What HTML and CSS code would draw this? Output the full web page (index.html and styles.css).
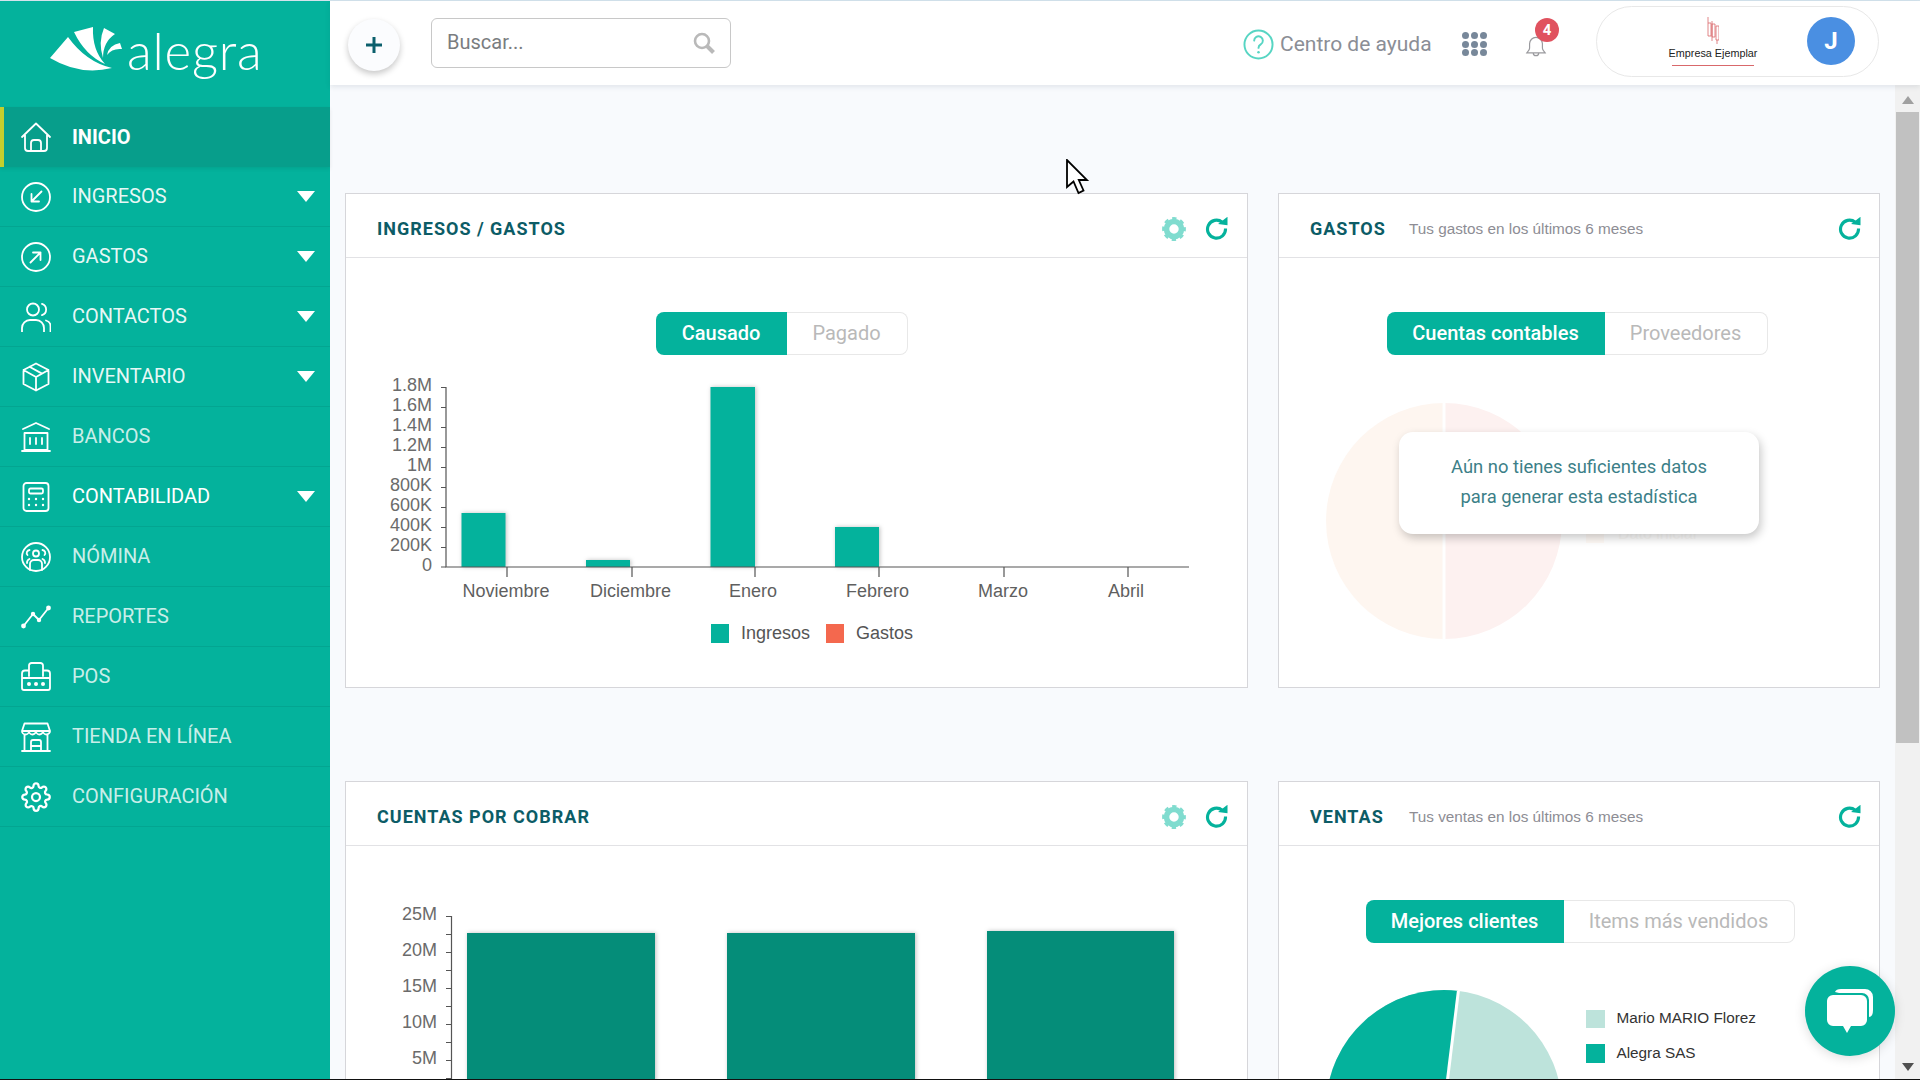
FILE: index.html
```html
<!DOCTYPE html>
<html lang="es">
<head>
<meta charset="utf-8">
<title>Alegra</title>
<link rel="stylesheet" href="styles.css">
</head>
<body>
<svg class="defs" width="0" height="0" aria-hidden="true">
  <symbol id="i-gear" viewBox="0 0 24 24">
    <circle cx="12" cy="12" r="7.5" fill="none" stroke="currentColor" stroke-width="5.6"/>
    <circle cx="12" cy="12" r="10.4" fill="none" stroke="currentColor" stroke-width="3" stroke-dasharray="4.3 3.87" stroke-dashoffset="2.15"/>
  </symbol>
  <symbol id="i-refresh" viewBox="0 1 22 22">
    <path d="M16.5 6 A8.6 8.6 0 1 0 19.6 12" fill="none" stroke="currentColor" stroke-width="3"/>
    <polygon points="12.5,7.6 21.5,0.8 21.5,9" fill="currentColor"/>
  </symbol>
</svg>

<div class="topline"></div>
<div class="layout">
  <aside class="sidebar">
    <div class="logo">
      <svg class="logo-mark" viewBox="48 25 78 50" width="78" height="50">
        <path d="M68 37 L50 58 Q80 76 112 68 Q86 62 68 37Z"/>
        <path d="M74 32 L93 27 Q92 50 105 64 Q85 55 74 32Z"/>
        <path d="M104 28 L115 34 Q103 42 103 58 Q98 42 104 28Z"/>
        <path d="M120 43 L122 49 Q112 48 107 55 Q109 45 120 43Z"/>
      </svg>
      <span class="logo-text">alegra</span>
    </div>
    <nav class="menu">
      <a class="item active">
        <svg class="ico" viewBox="0 0 30 30"><path d="M1 15 L15 1.5 L29 15M4 12V26a3 3 0 0 0 3 3H23a3 3 0 0 0 3-3V12M10 29V21a3 3 0 0 1 3-3h4a3 3 0 0 1 3 3V29"/></svg>
        <span>INICIO</span>
      </a>
      <a class="item strong">
        <svg class="ico" viewBox="0 0 30 30"><circle cx="15" cy="15" r="14"/><path d="M20.5 9.500 L10.500 19.500M10.500 12V19.500H18"/></svg>
        <span>INGRESOS</span><i class="caret"></i>
      </a>
      <a class="item strong">
        <svg class="ico" viewBox="0 0 30 30"><circle cx="15" cy="15" r="14"/><path d="M9.500 20.500 L19.500 10.500M12 10.500H19.500V18"/></svg>
        <span>GASTOS</span><i class="caret"></i>
      </a>
      <a class="item strong">
        <svg class="ico" viewBox="0 0 30 30"><circle cx="12" cy="7.500" r="6"/><path d="M21 1.800a6 6 0 0 1 0 11.400M1 30v-4a8 8 0 0 1 8-8h6a8 8 0 0 1 8 8v4M25 18.500a6 6 0 0 1 4.500 6V30"/></svg>
        <span>CONTACTOS</span><i class="caret"></i>
      </a>
      <a class="item strong">
        <svg class="ico" viewBox="0 0 30 30"><path d="M15 1.500 L27.500 8 V22 L15 28.500 L2.500 22 V8Z M2.500 8 L15 15 L27.500 8 M15 15V28.500 M8.500 4.800 L21 11.600"/></svg>
        <span>INVENTARIO</span><i class="caret"></i>
      </a>
      <a class="item">
        <svg class="ico" viewBox="0 0 30 30"><path d="M2 7 L15 1 L28 7M3.500 11H26.500V28H3.500ZM1 29H29M9 16V22M15 16V22M21 16V22"/></svg>
        <span>BANCOS</span>
      </a>
      <a class="item white">
        <svg class="ico" viewBox="0 0 30 30"><rect x="2.500" y="1" width="25" height="28" rx="3"/><rect x="8" y="6.500" width="14" height="5" rx="1.500"/><path class="dots" d="M8 17h.01M15 17h.01M22 17h.01M8 23h.01M15 23h.01M22 23h.01"/></svg>
        <span>CONTABILIDAD</span><i class="caret"></i>
      </a>
      <a class="item">
        <svg class="ico" viewBox="0 0 30 30"><circle cx="15" cy="15" r="14"/><circle cx="15" cy="11.500" r="3"/><path d="M9 28V22a4 4 0 0 1 4-4h4a4 4 0 0 1 4 4V28M8.500 8a3 3 0 0 0-2 5M21.500 8a3 3 0 0 1 2 5M6 21a4 4 0 0 1 2.500-4M24 21a4 4 0 0 0-2.500-4"/></svg>
        <span>NÓMINA</span>
      </a>
      <a class="item">
        <svg class="ico" viewBox="0 0 30 30"><path d="M2.500 24 L12 12 L18 18 L27.500 6"/><circle class="dot" cx="2.500" cy="24" r="2.400"/><circle class="dot" cx="12" cy="12" r="2.200"/><circle class="dot" cx="18" cy="18" r="2.200"/><circle class="dot" cx="27.500" cy="6" r="2.400"/></svg>
        <span>REPORTES</span>
      </a>
      <a class="item">
        <svg class="ico ico-wide" viewBox="0 0 32 30"><path d="M9 14V3.500a2.500 2.500 0 0 1 2.500-2.500h9A2.500 2.500 0 0 1 23 3.500V14M9 8.500H5a3 3 0 0 0-3 3V26a2 2 0 0 0 2 2H28a2 2 0 0 0 2-2V11.500a3 3 0 0 0-3-3H23M2 16H30"/><circle class="dot" cx="9" cy="22" r="2"/><circle class="dot" cx="16" cy="22" r="2"/><circle class="dot" cx="23" cy="22" r="2"/></svg>
        <span>POS</span>
      </a>
      <a class="item">
        <svg class="ico" viewBox="0 0 30 30"><path d="M3.500 1.500H26.500L29 9a3.500 3.500 0 0 1-7 0 3.500 3.500 0 0 1-7 0 3.500 3.500 0 0 1-7 0 3.500 3.500 0 0 1-7 0ZM1 9H29M3.500 13V29M26.500 13V29M1 29H29M10 29V20a2 2 0 0 1 2-2h6a2 2 0 0 1 2 2V29M10 24H20"/></svg>
        <span>TIENDA EN LÍNEA</span>
      </a>
      <a class="item">
        <svg class="ico" viewBox="0 0 24 24"><circle cx="12" cy="12" r="3.200"/><path d="M19.400 15a1.650 1.650 0 0 0 .33 1.820l.06.06a2 2 0 0 1 0 2.830 2 2 0 0 1-2.830 0l-.06-.06a1.650 1.650 0 0 0-1.820-.33 1.650 1.650 0 0 0-1 1.510V21a2 2 0 0 1-2 2 2 2 0 0 1-2-2v-.09A1.650 1.650 0 0 0 9 19.400a1.650 1.650 0 0 0-1.820.33l-.06.06a2 2 0 0 1-2.830 0 2 2 0 0 1 0-2.830l.06-.06a1.650 1.650 0 0 0 .33-1.820 1.650 1.650 0 0 0-1.510-1H3a2 2 0 0 1-2-2 2 2 0 0 1 2-2h.09A1.650 1.650 0 0 0 4.600 9a1.650 1.650 0 0 0-.33-1.820l-.06-.06a2 2 0 0 1 0-2.830 2 2 0 0 1 2.830 0l.06.06a1.650 1.650 0 0 0 1.820.33H9a1.650 1.650 0 0 0 1-1.510V3a2 2 0 0 1 2-2 2 2 0 0 1 2 2v.09a1.650 1.650 0 0 0 1 1.510 1.650 1.650 0 0 0 1.820-.33l.06-.06a2 2 0 0 1 2.830 0 2 2 0 0 1 0 2.830l-.06.06a1.650 1.650 0 0 0-.33 1.820V9a1.650 1.650 0 0 0 1.510 1H21a2 2 0 0 1 2 2 2 2 0 0 1-2 2h-.09a1.650 1.650 0 0 0-1.510 1z"/></svg>
        <span>CONFIGURACIÓN</span>
      </a>
    </nav>
  </aside>

  <main class="main">
    <header class="header">
      <button class="plus" type="button">
        <svg viewBox="0 0 18 18" width="18" height="18"><path d="M9 1V17M1 9H17"/></svg>
      </button>
      <div class="search">
        <span class="search-ph">Buscar...</span>
        <svg class="search-ico" viewBox="0 0 22 22" width="22" height="22"><circle cx="9" cy="9" r="7"/><path class="handle" d="M14 14 L20.500 20.500"/></svg>
      </div>
      <div class="header-right">
        <svg class="help" viewBox="0 0 32 32" width="31" height="31"><circle cx="16" cy="16" r="14.500"/><path d="M11.500 12a4.500 4.500 0 1 1 6.800 3.900c-1.400.8-2.300 1.700-2.300 3.600"/><circle class="help-dot" cx="16" cy="24" r="1.300"/></svg>
        <span class="help-text">Centro de ayuda</span>
        <div class="apps"><i></i><i></i><i></i><i></i><i></i><i></i><i></i><i></i><i></i></div>
        <div class="bell">
          <svg viewBox="0 0 24 24" width="22" height="23"><path d="M12 2a7 7 0 0 0-7 7v5c0 2-2 3.500-3 5H22c-1-1.500-3-3-3-5V9a7 7 0 0 0-7-7ZM9 19a3 3 0 0 0 6 0"/></svg>
          <span class="badge">4</span>
        </div>
        <div class="company">
          <div class="company-logo">
            <svg viewBox="0 0 12 27" width="12" height="27"><path d="M1 0V6M1 6H4V19H1ZM5 4V24M5 7H8V20H5ZM9 9H12V23H9ZM10 23V27"/></svg>
            <span class="company-name">Empresa Ejemplar</span>
            <i class="company-line"></i>
          </div>
          <span class="avatar">J</span>
        </div>
      </div>
    </header>

    <div class="body-row">
      <div class="content">
        <div class="grid">
          <section class="card">
            <div class="card-head">
              <h2>INGRESOS / GASTOS</h2>
              <div class="tools">
                <svg class="tool-gear" width="24" height="24"><use href="#i-gear"/></svg>
                <svg class="tool-refresh" width="23" height="23"><use href="#i-refresh"/></svg>
              </div>
            </div>
            <div class="card-body offset">
              <div class="toggle">
                <span class="opt on w-causado">Causado</span>
                <span class="opt w-pagado">Pagado</span>
              </div>
              <svg class="chart" viewBox="346 372 901 280" width="901" height="280">
                <g class="bars">
                  <rect x="461.500" y="513" width="44" height="54"/>
                  <rect x="586" y="560" width="44" height="7"/>
                  <rect x="710.500" y="387" width="44.500" height="180"/>
                  <rect x="835" y="527" width="44" height="40"/>
                </g>
                <g class="axis">
                  <path d="M446 387V567H1189"/>
                  <path d="M441 387.500H446M441 407.500H446M441 427.500H446M441 447.500H446M441 467.500H446M441 487.500H446M441 507.500H446M441 527.500H446M441 547.500H446M441 567H446"/>
                  <path d="M507 567V577M632 567V577M755 567V577M879 567V577M1004 567V577M1128 567V577"/>
                </g>
                <g class="ylab">
                  <text x="432" y="391">1.8M</text><text x="432" y="411">1.6M</text><text x="432" y="431">1.4M</text><text x="432" y="451">1.2M</text><text x="432" y="471">1M</text><text x="432" y="491">800K</text><text x="432" y="511">600K</text><text x="432" y="531">400K</text><text x="432" y="551">200K</text><text x="432" y="571">0</text>
                </g>
                <g class="xlab">
                  <text x="506" y="597">Noviembre</text><text x="630.500" y="597">Diciembre</text><text x="753" y="597">Enero</text><text x="877.500" y="597">Febrero</text><text x="1003" y="597">Marzo</text><text x="1126" y="597">Abril</text>
                </g>
                <rect class="sw-teal" x="711" y="624" width="18" height="19"/>
                <text class="leg" x="741" y="639">Ingresos</text>
                <rect class="sw-red" x="826" y="624" width="18" height="19"/>
                <text class="leg" x="856" y="639">Gastos</text>
              </svg>
            </div>
          </section>

          <section class="card">
            <div class="card-head">
              <h2 class="side">GASTOS</h2>
              <span class="sub">Tus gastos en los últimos 6 meses</span>
              <div class="tools solo">
                <svg class="tool-refresh" width="23" height="23"><use href="#i-refresh"/></svg>
              </div>
            </div>
            <div class="card-body">
              <div class="toggle nudge-left">
                <span class="opt on w-cuentas">Cuentas contables</span>
                <span class="opt w-prov">Proveedores</span>
              </div>
              <svg class="chart" viewBox="1279 372 600 280" width="600" height="280">
                <path class="pie-a" d="M1444 403A118 118 0 0 0 1444 639Z"/>
                <path class="pie-b" d="M1444 403A118 118 0 0 1 1444 639Z"/>
                <path class="pie-gap" d="M1444 403V639"/>
                <rect class="faint-sw" x="1586" y="525" width="18" height="18"/>
                <text class="faint-tx" x="1618" y="539">Dato inicial</text>
              </svg>
              <div class="empty">Aún no tienes suficientes datos<br>para generar esta estadística</div>
            </div>
          </section>

          <section class="card">
            <div class="card-head">
              <h2>CUENTAS POR COBRAR</h2>
              <div class="tools">
                <svg class="tool-gear" width="24" height="24"><use href="#i-gear"/></svg>
                <svg class="tool-refresh" width="23" height="23"><use href="#i-refresh"/></svg>
              </div>
            </div>
            <div class="card-body">
              <svg class="chart chart-low" viewBox="346 900 901 300" width="901" height="300">
                <g class="bars dark">
                  <rect x="467" y="933" width="188" height="267"/>
                  <rect x="727" y="933" width="188" height="267"/>
                  <rect x="987" y="931" width="187" height="269"/>
                </g>
                <g class="axis">
                  <path d="M451.500 916V1200"/>
                  <path d="M446 916.500H451M446 934.500H451M446 952.500H451M446 970.500H451M446 988.500H451M446 1006.500H451M446 1024.500H451M446 1042.500H451M446 1060.500H451M446 1078.500H451"/>
                </g>
                <g class="ylab">
                  <text x="437" y="920">25M</text><text x="437" y="956">20M</text><text x="437" y="992">15M</text><text x="437" y="1028">10M</text><text x="437" y="1064">5M</text>
                </g>
              </svg>
            </div>
          </section>

          <section class="card">
            <div class="card-head">
              <h2 class="side">VENTAS</h2>
              <span class="sub">Tus ventas en los últimos 6 meses</span>
              <div class="tools solo">
                <svg class="tool-refresh" width="23" height="23"><use href="#i-refresh"/></svg>
              </div>
            </div>
            <div class="card-body">
              <div class="toggle nudge-right">
                <span class="opt on w-mejores">Mejores clientes</span>
                <span class="opt w-items">Items más vendidos</span>
              </div>
              <svg class="chart" viewBox="1279 960 600 240" width="600" height="240">
                <circle class="pie-light" cx="1444" cy="1108" r="118"/>
                <path class="pie-dark" d="M1444 1108L1458.400 990.900A118 118 0 0 0 1326 1108Z"/>
                <path class="pie-gap" d="M1444 1108L1458.400 990.900"/>
                <rect class="sw-light" x="1586" y="1010" width="19" height="18"/>
                <text class="leg-small" x="1616.500" y="1023">Mario MARIO Florez</text>
                <rect class="sw-teal" x="1586" y="1044" width="19" height="19"/>
                <text class="leg-small" x="1616.500" y="1058">Alegra SAS</text>
              </svg>
            </div>
          </section>
        </div>
      </div>
      <div class="scrollbar">
        <i class="arrow up"></i>
        <i class="thumb"></i>
        <i class="arrow down"></i>
      </div>
    </div>
  </main>
</div>
<div class="bottomline"></div>

<button class="chat" type="button">
  <svg viewBox="0 0 90 90" width="90" height="90">
    <path d="M30 26Q31 23 36 23H60a8 8 0 0 1 8 8V44Q68 51 64 51V34a7 7 0 0 0-7-7H34Z"/>
    <path d="M28 29H56a6 6 0 0 1 6 6V54a6 6 0 0 1-6 6H46L42 67L38 60H28a6 6 0 0 1-6-6V35a6 6 0 0 1 6-6Z"/>
  </svg>
</button>
<svg class="cursor" viewBox="0 0 24 36" width="24" height="36"><path d="M1 1V28L7.500 22.500L12.500 34L17.500 31.500L12.800 21H21Z"/></svg>
</body>
</html>
```
FILE: styles.css
```css
* { box-sizing: border-box; }
html, body { margin: 0; padding: 0; height: 100%; }
body {
  width: 1920px;
  height: 1080px;
  overflow: hidden;
  display: flex;
  flex-direction: column;
  font-family: Roboto, "Liberation Sans", sans-serif;
  background: #f8fafd;
}
.defs { position: absolute; }
.topline { height: 1px; background: #d3e3ec; flex: none; }
.bottomline { height: 1px; background: #111; flex: none; }
.layout { flex: 1; display: flex; min-height: 0; }

/* sidebar */
.sidebar { width: 330px; flex: none; background: #04b29c; display: flex; flex-direction: column; }
.logo { height: 106px; flex: none; display: flex; align-items: flex-start; padding: 24px 0 0 48px; }
.logo-mark { fill: #fff; flex: none; }
.logo-text {
  font-family: Lato, "Open Sans", sans-serif;
  font-weight: 300;
  font-size: 51px;
  line-height: 50px;
  color: #fff;
  margin: 1px 0 0 1px;
  letter-spacing: 0.8px;
}
.menu { display: flex; flex-direction: column; }
.item {
  height: 60px;
  display: flex;
  align-items: center;
  padding-left: 21px;
  color: rgba(255, 255, 255, .8);
  font-size: 20px;
  border-bottom: 1px solid rgba(0, 0, 0, .07);
}
.item span { margin-left: 21px; margin-bottom: 1px; flex: 1; }
.item.strong { color: rgba(255, 255, 255, .92); }
.item.white { color: #fff; }
.item.active {
  background: #079e8b;
  border-left: 4px solid #c3cf2d;
  padding-left: 17px;
  color: #fff;
  font-weight: 700;
  border-bottom: 0;
  box-shadow: 0 2px 4px rgba(0, 0, 0, .08);
  position: relative;
}
.ico { width: 30px; height: 30px; flex: none; fill: none; stroke: #fff; stroke-width: 1.8; stroke-linecap: round; stroke-linejoin: round; }
.ico .dot { fill: #fff; stroke: none; }
.ico .dots { stroke-width: 2.4; }
.ico-wide { width: 32px; margin-left: -1px; margin-right: -1px; }
.caret {
  width: 0; height: 0;
  border-left: 9.500px solid transparent;
  border-right: 9.500px solid transparent;
  border-top: 11px solid #fff;
  margin-right: 15px;
}

/* main + header */
.main { flex: 1; display: flex; flex-direction: column; min-width: 0; }
.header {
  height: 84px;
  flex: none;
  background: #fff;
  display: flex;
  align-items: center;
  padding: 0 41px 0 18px;
  box-shadow: 0 2px 5px rgba(30, 50, 70, .1);
  position: relative;
  z-index: 2;
}
.plus {
  width: 52px; height: 52px;
  margin-top: 3px;
  border: 0; border-radius: 50%;
  background: #fbfcfe;
  box-shadow: 0 3px 6px rgba(0, 0, 0, .22);
  display: flex; align-items: center; justify-content: center;
  padding: 0; flex: none;
}
.plus path { stroke: #0b5f6c; stroke-width: 3; fill: none; }
.search {
  width: 300px; height: 50px;
  margin-left: 31px;
  border: 1px solid #c8c8c8;
  border-radius: 6px;
  display: flex; align-items: center;
  padding: 0 15px 0 15px;
  flex: none;
}
.search-ph { flex: 1; font-size: 20px; color: #7a7d80; margin-top: -2px; }
.search-ico { fill: none; stroke: #b9b9b9; stroke-width: 2.6; }
.search-ico .handle { stroke-width: 4; }
.header-right { margin-left: auto; display: flex; align-items: center; }
.help { fill: none; stroke: #57d5c3; stroke-width: 2; stroke-linecap: round; margin-top: 2px; }
.help .help-dot { fill: #57d5c3; stroke: none; }
.help-text { margin-left: 6px; font-size: 21px; color: #8b8e96; width: 150px; white-space: nowrap; margin-top: 2px; }
.apps { margin-left: 32px; width: 25px; display: grid; grid-template-columns: repeat(3, 7px); gap: 1.500px 2px; margin-top: 2px; }
.apps i { width: 7px; height: 7px; border-radius: 50%; background: #78889a; }
.bell { margin-left: 38px; width: 22px; height: 23px; position: relative; margin-top: 6px; }
.bell svg { fill: none; stroke: #9a9a9e; stroke-width: 1.300; display: block; }
.badge {
  position: absolute;
  left: 10px; top: -17px;
  width: 24px; height: 24px;
  border-radius: 50%;
  background: #e0525f;
  color: #fff;
  font-size: 15px; font-weight: 700;
  display: flex; align-items: center; justify-content: center;
}
.company {
  margin-left: 49px;
  margin-top: -3px;
  width: 283px; height: 71px;
  border: 1px solid #e8e8e8;
  border-radius: 36px;
  display: flex; align-items: flex-start;
  padding: 10px 23px 0 70px;
  flex: none;
}
.company-logo { width: 92px; display: flex; flex-direction: column; align-items: center; }
.company-logo svg { fill: none; stroke: #d9686b; stroke-width: .8; display: block; }
.company-name { font-family: "Liberation Sans", sans-serif; font-size: 10.800px; color: #222; white-space: nowrap; line-height: 14px; margin-top: 2px; }
.company-line { width: 82px; height: 1px; background: #d9686b; margin-top: 5px; }
.avatar {
  margin-left: auto;
  width: 48px; height: 48px;
  border-radius: 50%;
  background: #4a8fe2;
  color: #fff;
  font-size: 24px; font-weight: 700;
  display: flex; align-items: center; justify-content: center;
}

/* content */
.body-row { flex: 1; display: flex; min-height: 0; }
.content { flex: 1; padding: 108px 15px 0; overflow: hidden; background: #f8fafd; }
.grid { display: grid; grid-template-columns: 903px 602px; grid-template-rows: 495px 495px; column-gap: 30px; row-gap: 93px; }
.card { background: #fff; border: 1px solid #d6d6da; display: flex; flex-direction: column; min-height: 0; }
.card-head { height: 64px; flex: none; display: flex; align-items: center; padding: 6px 19px 0 31px; border-bottom: 1px solid #e2e2e5; }
.card-head h2 { margin: 0; font-size: 18px; font-weight: 700; letter-spacing: 1px; color: #0c5c66; white-space: nowrap; }
.card-head h2.side { min-width: 99px; }
.sub { font-family: "Liberation Sans", sans-serif; font-size: 15.300px; color: #8d8d94; white-space: nowrap; }
.tools { margin-left: auto; display: flex; align-items: center; gap: 19px; }
.tools.solo { margin-right: -1px; }
.tool-gear { color: #80dccf; display: block; }
.tool-refresh { color: #04b29c; display: block; }
.card-body { flex: 1; position: relative; display: flex; flex-direction: column; align-items: center; padding-top: 54px; min-height: 0; overflow: hidden; }
.card-body.offset { padding-right: 30px; }
.toggle { display: flex; height: 43px; flex: none; }
.nudge-left { margin-right: 4px; }
.nudge-right { margin-left: 2px; }
.opt {
  display: flex; align-items: center; justify-content: center;
  font-size: 20px; color: #b9b9b9;
  padding-bottom: 2px;
  border: 1px solid #e8e8e8; border-left: 0;
  border-radius: 0 8px 8px 0;
  white-space: nowrap;
}
.opt.on { background: #04b29c; color: #fff; font-weight: 500; border: 0; border-radius: 8px 0 0 8px; }
.w-causado { width: 131px; } .w-pagado { width: 121px; }
.w-cuentas { width: 218px; } .w-prov { width: 163px; }
.w-mejores { width: 198px; } .w-items { width: 231px; }
.chart { display: block; flex: none; margin-top: 17px; align-self: flex-start; overflow: visible; }
.chart-low { margin-top: 0; }
.chart text { font-family: "Liberation Sans", Arial, sans-serif; }
.bars rect { fill: #04b29c; filter: drop-shadow(1px 0 2px rgba(0, 0, 0, .25)); }
.bars.dark rect { fill: #058d79; }
.axis path { fill: none; stroke: #555; stroke-width: 1.200; }
.ylab text { font-size: 18px; fill: #6b6b6b; text-anchor: end; }
.xlab text { font-size: 18px; fill: #5f5f5f; text-anchor: middle; }
.leg { font-size: 18px; fill: #555; }
.leg-small { font-size: 15.300px; fill: #333; }
.sw-teal { fill: #04b29c; }
.sw-red { fill: #f4684e; }
.sw-light { fill: #bde3db; }
.pie-a { fill: #fef6f0; }
.pie-b { fill: #fdf1f0; }
.pie-gap { stroke: #fff; stroke-width: 3; fill: none; }
.faint-sw { fill: #fffaf6; }
.faint-tx { font-size: 16px; fill: #faf9f7; }
.pie-light { fill: #bde3db; }
.pie-dark { fill: #04b29c; }
.empty {
  position: absolute;
  top: 174px; left: 50%;
  transform: translateX(-50%);
  width: 360px; height: 102px;
  padding-top: 20px;
  background: #fff;
  border-radius: 14px;
  box-shadow: 2px 4px 10px rgba(0, 0, 0, .22);
  font-size: 18.400px; line-height: 29.500px;
  color: #3c7f88;
  text-align: center;
}

/* scrollbar */
.scrollbar { width: 25px; flex: none; background: #f1f1f1; display: flex; flex-direction: column; align-items: center; }
.arrow { width: 0; height: 0; border-left: 6.500px solid transparent; border-right: 6.500px solid transparent; flex: none; }
.arrow.up { border-bottom: 8px solid #a0a0a0; margin: 11px 0 8px; }
.arrow.down { border-top: 8px solid #505050; margin: auto 0 8px; }
.thumb { width: 23px; height: 631px; background: #c1c1c1; flex: none; }

/* overlays */
.chat {
  position: absolute;
  left: 1805px; top: 966px;
  width: 90px; height: 90px;
  border: 0; border-radius: 50%;
  background: #04b29c;
  box-shadow: 0 2px 12px rgba(0, 0, 0, .14);
  padding: 0;
}
.chat svg { display: block; fill: #fff; }
.cursor { position: absolute; left: 1066px; top: 159px; }
.cursor path { fill: #fff; stroke: #000; stroke-width: 1.800; stroke-linejoin: miter; }
```
